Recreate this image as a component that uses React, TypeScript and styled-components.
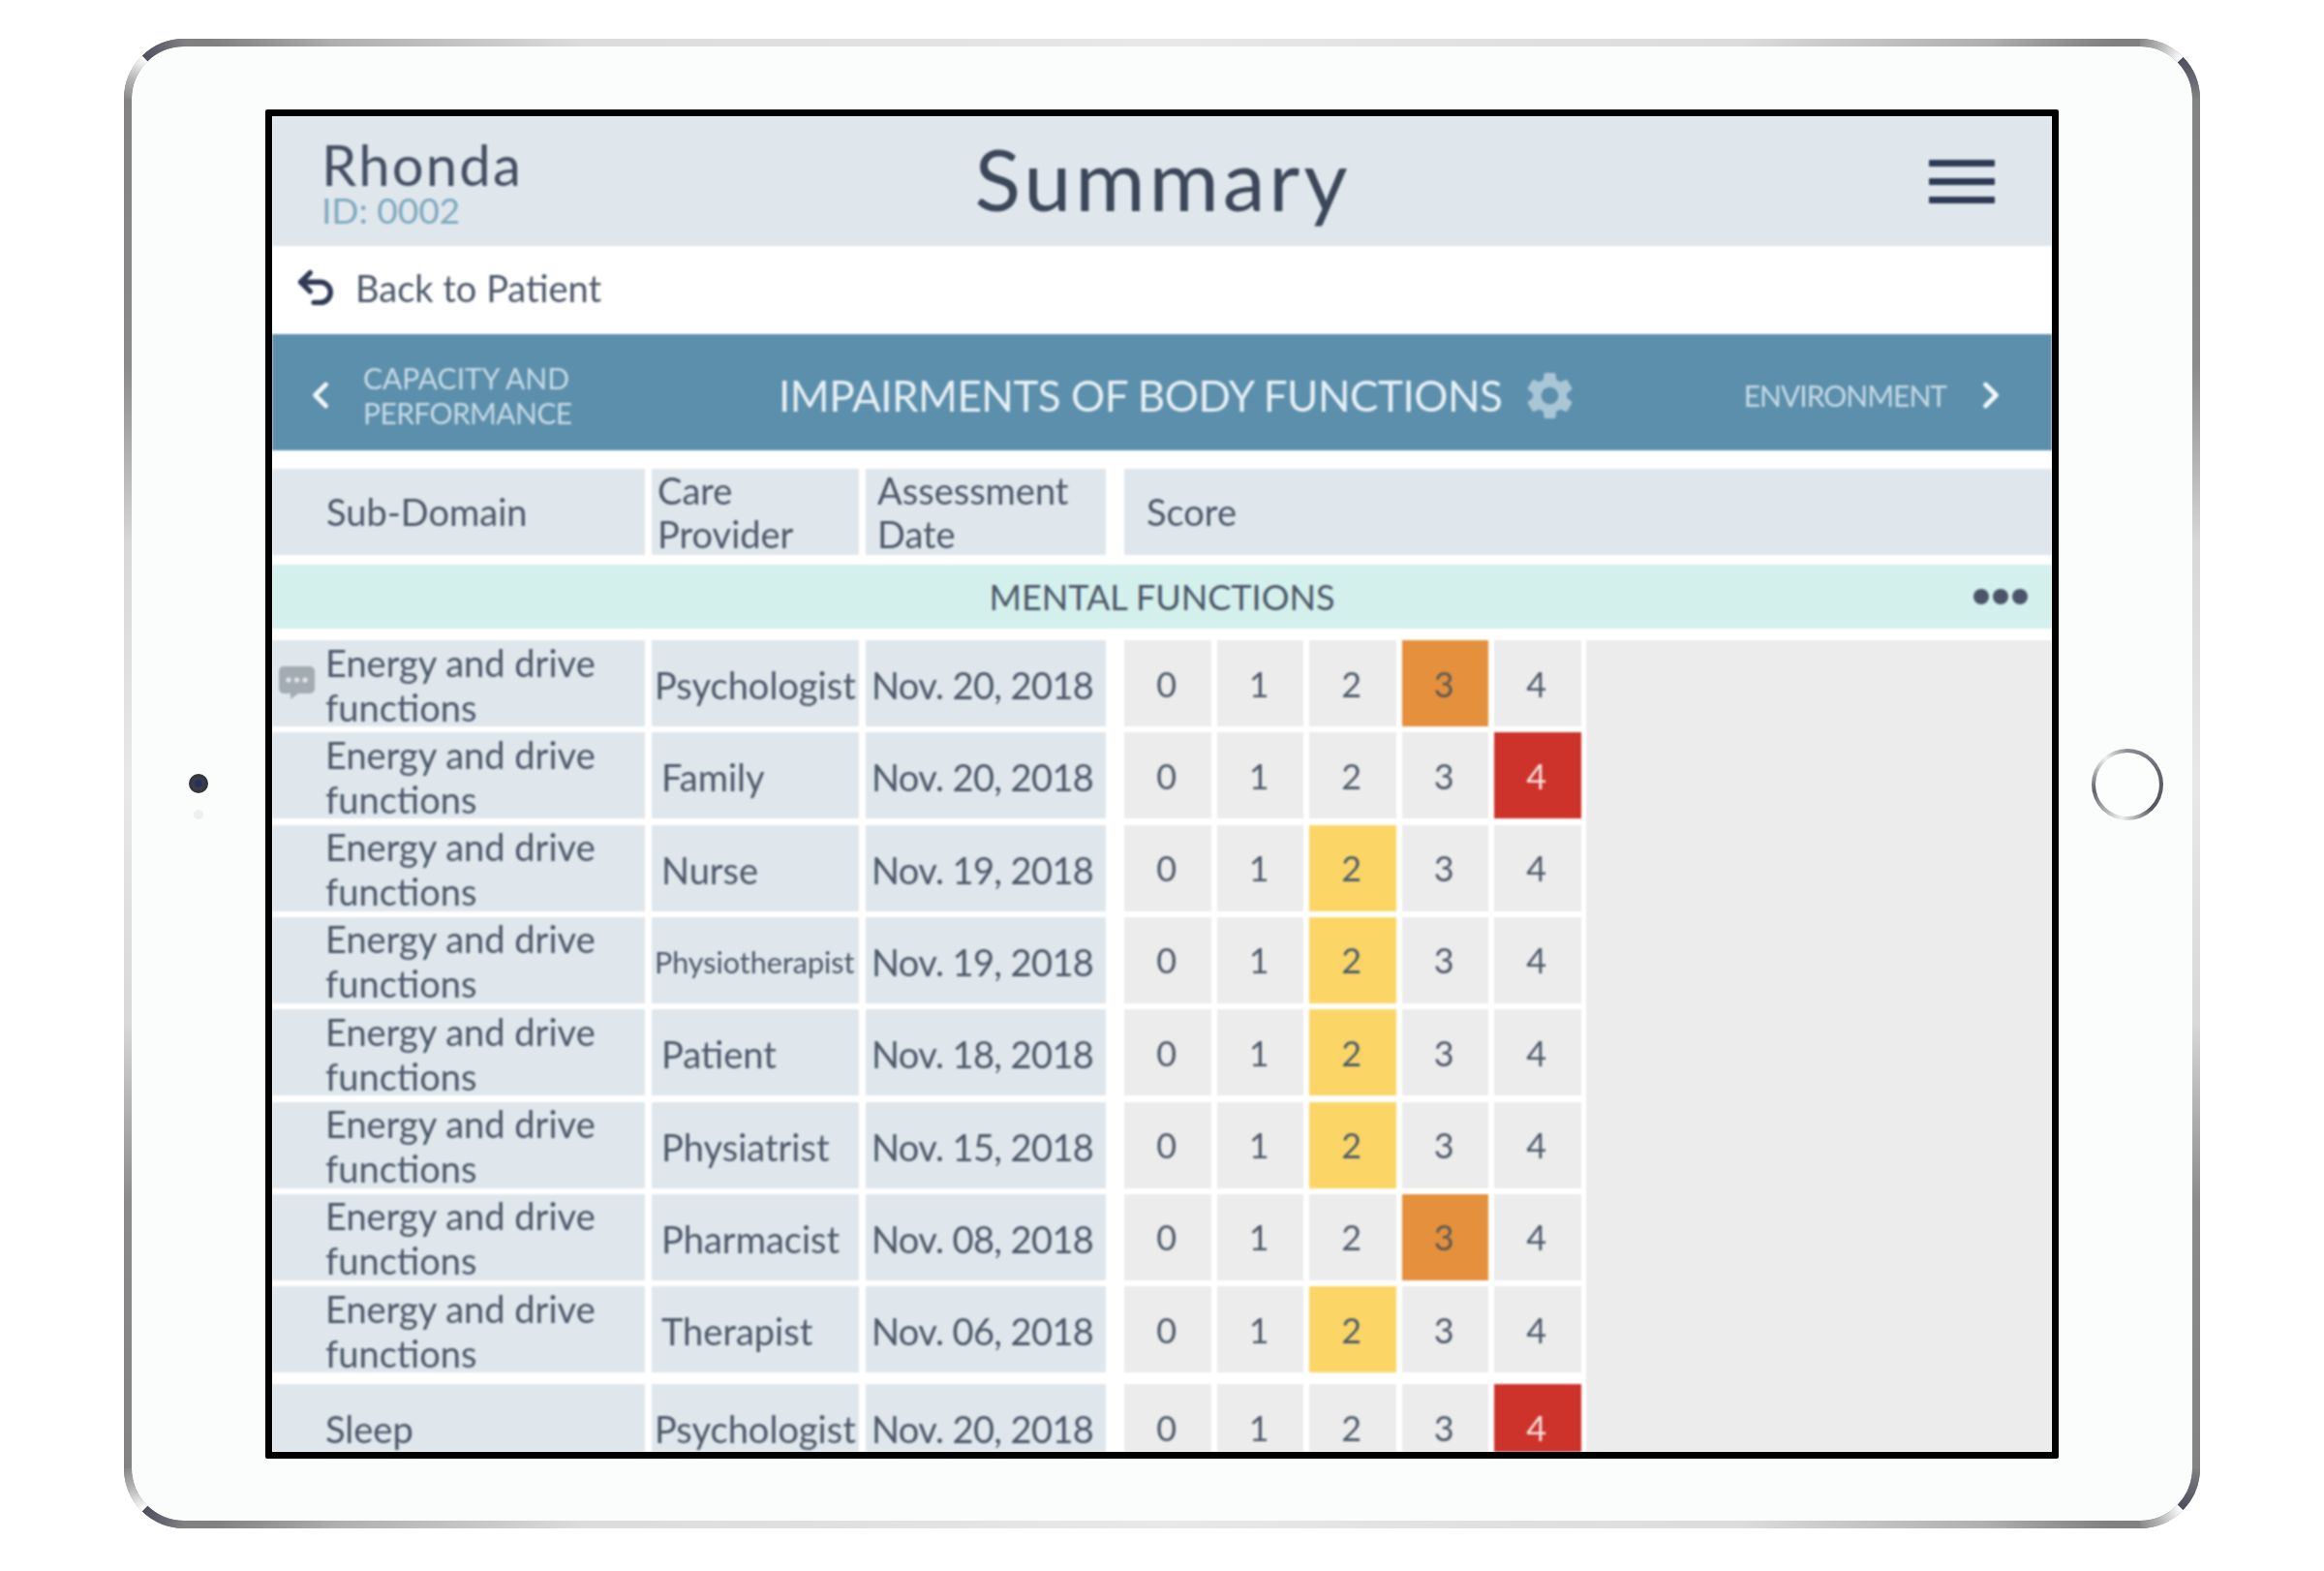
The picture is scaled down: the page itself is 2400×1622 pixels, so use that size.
import styled, { createGlobalStyle } from 'styled-components';
import { Undo2, ChevronLeft, ChevronRight } from 'lucide-react';
import { MdSettings } from 'react-icons/md';

const GlobalStyle = createGlobalStyle`
  html, body {
    margin: 0;
    padding: 0;
    background: #fff;
    font-family: 'Lato', 'Liberation Sans', sans-serif;
    color: #4c5768;
  }
`;

const Page = styled.div`
  width: 2400px;
  height: 1622px;
  padding: 40px 128px 0;
  box-sizing: border-box;
  overflow: hidden;
`;

const Device = styled.div`
  position: relative;
  width: 2144px;
  height: 1538px;
  padding: 8px;
  box-sizing: border-box;
  border-radius: 62px;
  background: conic-gradient(
    #e8e8e8 0deg,
    #dcdcdc 38deg,
    #b0b0b0 48deg,
    #808080 52deg,
    #8b8b8b 68deg,
    #d8d8d8 77deg,
    #e8e8e8 90deg,
    #d8d8d8 103deg,
    #8b8b8b 112deg,
    #808080 128deg,
    #b0b0b0 132deg,
    #dcdcdc 142deg,
    #e8e8e8 180deg,
    #dcdcdc 218deg,
    #b0b0b0 228deg,
    #808080 232deg,
    #8b8b8b 248deg,
    #d8d8d8 257deg,
    #e8e8e8 270deg,
    #d8d8d8 283deg,
    #8b8b8b 292deg,
    #808080 308deg,
    #b0b0b0 312deg,
    #dcdcdc 322deg,
    #e8e8e8 360deg
  );
`;

const Bezel = styled.div`
  height: 100%;
  box-sizing: border-box;
  padding: 65px 0 64px;
  border-radius: 54px;
  background: #fbfcfc;
  display: grid;
  grid-template-columns: 138px 1852px 138px;
`;

const Sensors = styled.div`
  display: flex;
  flex-direction: column;
  align-items: center;
  gap: 17px;
  padding-top: 686px;
`;

const Camera = styled.div`
  width: 20px;
  height: 20px;
  border-radius: 50%;
  background: radial-gradient(circle, #24305a 0 3px, #3b3e4a 5px, #30323a 10px);
`;

const Sensor = styled.div`
  width: 10px;
  height: 10px;
  border-radius: 50%;
  background: #efefef;
`;

const HomeColumn = styled.div`
  display: flex;
  align-items: center;
  justify-content: center;
  padding-left: 4px;
`;

const HomeButton = styled.div`
  width: 74px;
  height: 74px;
  padding: 4px;
  box-sizing: border-box;
  border-radius: 50%;
  background: conic-gradient(
    #8a8a90 0deg,
    #5a5c68 90deg,
    #55565f 135deg,
    #f0f0f0 190deg,
    #5f6068 260deg,
    #f0f0f0 320deg,
    #8a8a90 360deg
  );
`;

const HomeFace = styled.div`
  width: 100%;
  height: 100%;
  border-radius: 50%;
  background: #fcfdfd;
`;

const CornerSvg = styled.svg<{ $top?: boolean; $left?: boolean; $transform?: string }>`
  position: absolute;
  width: 70px;
  height: 70px;
  ${(p) => (p.$top ? 'top: 0;' : 'bottom: 0;')}
  ${(p) => (p.$left ? 'left: 0;' : 'right: 0;')}
  transform: ${(p) => p.$transform || 'none'};
`;

const Corner = ({ id, top, left, transform }: { id: string; top?: boolean; left?: boolean; transform?: string }) => (
  <CornerSvg viewBox='0 0 70 70' $top={top} $left={left} $transform={transform}>
    <defs>
      <linearGradient id={`${id}-light`} gradientUnits='userSpaceOnUse' x1='4' y1='62' x2='21.7' y2='20.3'>
        <stop offset='0' stopColor='#8a8a8a' />
        <stop offset='0.45' stopColor='#b5b5b5' />
        <stop offset='1' stopColor='#ffffff' />
      </linearGradient>
      <linearGradient id={`${id}-dark`} gradientUnits='userSpaceOnUse' x1='21.7' y1='20.3' x2='62' y2='4'>
        <stop offset='0' stopColor='#4c4f5e' />
        <stop offset='0.45' stopColor='#62646e' />
        <stop offset='1' stopColor='#808080' />
      </linearGradient>
    </defs>
    <path d='M4 62A58 58 0 0 1 21.7 20.3' fill='none' stroke={`url(#${id}-light)`} strokeWidth='8' />
    <path d='M21.7 20.3A58 58 0 0 1 62 4' fill='none' stroke={`url(#${id}-dark)`} strokeWidth='8' />
  </CornerSvg>
);

const Screen = styled.div`
  border: 7px solid #000;
  border-radius: 2px;
  background: #fff;
  overflow: hidden;
`;

const ScreenContent = styled.div`
  height: 100%;
  display: flex;
  flex-direction: column;
  filter: blur(0.8px);
`;

const TopBar = styled.header`
  flex: none;
  height: 134px;
  background: #dfe7ed;
  display: grid;
  grid-template-columns: 1fr auto 1fr;
  align-items: center;
  padding: 0 59px 0 51px;
`;

const Patient = styled.div`
  display: flex;
  flex-direction: column;
`;

const PatientName = styled.div`
  font-size: 58px;
  line-height: 60px;
  letter-spacing: 2.2px;
  color: #454f62;
`;

const PatientId = styled.div`
  font-size: 37px;
  line-height: 34px;
  color: #7fa9be;
`;

const Title = styled.h1`
  margin: 0;
  padding: 0 0 6px 10px;
  font-size: 88px;
  font-weight: 400;
  line-height: 1;
  letter-spacing: 3.9px;
  color: #3c4759;
`;

const Hamburger = styled.div`
  justify-self: end;
  width: 68px;
  display: flex;
  flex-direction: column;
  gap: 12px;
`;

const HamburgerBar = styled.div`
  height: 7px;
  border-radius: 1px;
  background: #2f3a55;
`;

const BackRow = styled.div`
  flex: none;
  height: 91px;
  box-sizing: border-box;
  padding: 0 0 5px 22px;
  display: flex;
  align-items: center;
  gap: 18px;
  font-size: 38px;
  color: #4c5768;
`;

const NavBar = styled.nav`
  flex: none;
  height: 120px;
  box-sizing: border-box;
  padding-top: 6px;
  margin-bottom: 19px;
  background: #5c8fac;
  display: grid;
  grid-template-columns: 523px auto 1fr;
  align-items: center;
`;

const NavSide = styled.div`
  display: flex;
  align-items: center;
  color: #c6dbe6;
  font-size: 30px;
  line-height: 36px;
`;

const NavPrev = styled(NavSide)`
  gap: 22px;
  padding-left: 28px;
`;

const NavPrevTail = styled.span`
  letter-spacing: -0.6px;
`;

const NavNext = styled(NavSide)`
  justify-content: flex-end;
  gap: 24px;
  padding-right: 41px;
  letter-spacing: -1px;
`;

const NavChevron = styled.div`
  display: flex;
  color: #f2f6f8;
`;

const NavTitle = styled.div`
  display: flex;
  align-items: center;
  gap: 20px;
  font-size: 44px;
  letter-spacing: -0.5px;
  color: #e6eff4;
`;

const GearIcon = styled(MdSettings)`
  width: 59px;
  height: 59px;
  color: #a9c6d6;
`;

const TableRow = styled.div<{ $gapAbove?: number }>`
  flex: none;
  display: grid;
  grid-template-columns: 385px 214px 248px 1fr;
  grid-template-rows: 89px;
  column-gap: 7px;
  margin-top: ${(p) => p.$gapAbove || 0}px;
`;

const HeadCell = styled.div<{ $pad: number }>`
  display: flex;
  align-items: center;
  padding-left: ${(p) => p.$pad}px;
  background: #dfe7ed;
  font-size: 38px;
  line-height: 45px;
  color: #4c5768;
`;

const ScoreHead = styled(HeadCell)`
  margin-left: 12px;
`;

const SectionBar = styled.div`
  flex: none;
  position: relative;
  height: 66px;
  margin: 10px 0 12px;
  background: #d3f0ec;
  display: flex;
  align-items: center;
  justify-content: center;
  font-size: 36px;
  color: #4c5768;
`;

const MoreDots = styled.div`
  position: absolute;
  right: 25px;
  top: 25px;
  display: flex;
  gap: 4px;
`;

const MoreDot = styled.div`
  width: 16px;
  height: 16px;
  border-radius: 50%;
  background: #4b5569;
`;

const TableBody = styled.div`
  flex: 1;
  min-height: 0;
  overflow: hidden;
  display: flex;
  flex-direction: column;
  gap: 6.33px;
  background: linear-gradient(to right, transparent 1357px, #ececec 0);
`;

const DomainCell = styled.div`
  position: relative;
  display: flex;
  align-items: center;
  padding: 2px 0 0 55px;
  background: #dfe7ed;
  font-size: 38px;
  line-height: 46px;
  color: #4c5768;
`;

const CommentIcon = styled.svg`
  position: absolute;
  left: 7px;
  top: 27px;
  width: 37px;
  height: 34px;
`;

const CareCell = styled.div<{ $inset: number; $small?: boolean }>`
  display: flex;
  align-items: center;
  padding: 3px 0 0 ${(p) => p.$inset}px;
  background: #dfe7ed;
  font-size: ${(p) => (p.$small ? 30.5 : 38)}px;
  white-space: nowrap;
  color: #4c5768;
`;

const DateCell = styled.div`
  display: flex;
  align-items: center;
  padding: 3px 0 0 6px;
  background: #dfe7ed;
  font-size: 38px;
  letter-spacing: -0.6px;
  white-space: nowrap;
  color: #4c5768;
`;

const Scores = styled.div`
  margin-left: 12px;
  display: grid;
  grid-template-columns: repeat(5, 89.5px);
  column-gap: 6px;
  width: 471.5px;
`;

const levelColor: Record<number, string> = { 2: '#fbd667', 3: '#e5903d', 4: '#cd332b' };

const ScoreCell = styled.div<{ $level?: number }>`
  display: flex;
  align-items: center;
  justify-content: center;
  padding: 0 2px 0 0;
  font-size: 36px;
  background: ${(p) => (p.$level ? levelColor[p.$level] : '#ececec')};
  color: ${(p) => (p.$level === 4 ? '#f6dedc' : p.$level === 3 ? '#5f5a52' : '#4f5a69')};
`;

type Entry = { provider: string; inset: number; small?: boolean; date: string; score: number };

const entries: Entry[] = [
  { provider: 'Psychologist', inset: 3, date: 'Nov. 20, 2018', score: 3 },
  { provider: 'Family', inset: 10, date: 'Nov. 20, 2018', score: 4 },
  { provider: 'Nurse', inset: 10, date: 'Nov. 19, 2018', score: 2 },
  { provider: 'Physiotherapist', inset: 3, small: true, date: 'Nov. 19, 2018', score: 2 },
  { provider: 'Patient', inset: 10, date: 'Nov. 18, 2018', score: 2 },
  { provider: 'Physiatrist', inset: 10, date: 'Nov. 15, 2018', score: 2 },
  { provider: 'Pharmacist', inset: 10, date: 'Nov. 08, 2018', score: 3 },
  { provider: 'Therapist', inset: 10, date: 'Nov. 06, 2018', score: 2 },
];

const ScoreRow = ({ score }: { score: number }) => (
  <Scores>
    {[0, 1, 2, 3, 4].map((n) => (
      <ScoreCell key={n} $level={n === score ? n : undefined}>
        {n}
      </ScoreCell>
    ))}
  </Scores>
);

const Comment = () => (
  <CommentIcon viewBox='0 0 37 34'>
    <path d='M5 0h27a5 5 0 0 1 5 5v18a5 5 0 0 1-5 5H20l-8 6v-6H5a5 5 0 0 1-5-5V5a5 5 0 0 1 5-5z' fill='#a3abb3' />
    <circle cx='10' cy='14' r='2.6' fill='#e4e8ec' />
    <circle cx='18.5' cy='14' r='2.6' fill='#e4e8ec' />
    <circle cx='27' cy='14' r='2.6' fill='#e4e8ec' />
  </CommentIcon>
);

export default function App() {
  return (
    <Page>
      <GlobalStyle />
      <Device>
        <Corner id='tl' top left />
        <Corner id='tr' top transform='rotate(90deg)' />
        <Corner id='bl' left transform='scaleY(-1)' />
        <Corner id='br' transform='scaleY(-1) rotate(90deg)' />
        <Bezel>
          <Sensors>
            <Camera />
            <Sensor />
          </Sensors>
          <Screen>
            <ScreenContent>
              <TopBar>
                <Patient>
                  <PatientName>Rhonda</PatientName>
                  <PatientId>ID: 0002</PatientId>
                </Patient>
                <Title>Summary</Title>
                <Hamburger>
                  <HamburgerBar />
                  <HamburgerBar />
                  <HamburgerBar />
                </Hamburger>
              </TopBar>
              <BackRow>
                <Undo2 size={46} strokeWidth={2.8} color='#2f3a55' />
                Back to Patient
              </BackRow>
              <NavBar>
                <NavPrev>
                  <NavChevron>
                    <ChevronLeft size={44} strokeWidth={2.6} />
                  </NavChevron>
                  <div>
                    CAPACITY AND
                    <br />
                    <NavPrevTail>PERFORMANCE</NavPrevTail>
                  </div>
                </NavPrev>
                <NavTitle>
                  IMPAIRMENTS OF BODY FUNCTIONS
                  <GearIcon />
                </NavTitle>
                <NavNext>
                  ENVIRONMENT
                  <NavChevron>
                    <ChevronRight size={44} strokeWidth={2.6} />
                  </NavChevron>
                </NavNext>
              </NavBar>
              <TableRow>
                <HeadCell $pad={56}>Sub-Domain</HeadCell>
                <HeadCell $pad={6}>
                  Care
                  <br />
                  Provider
                </HeadCell>
                <HeadCell $pad={12}>
                  Assessment
                  <br />
                  Date
                </HeadCell>
                <ScoreHead $pad={23}>Score</ScoreHead>
              </TableRow>
              <SectionBar>
                MENTAL FUNCTIONS
                <MoreDots>
                  <MoreDot />
                  <MoreDot />
                  <MoreDot />
                </MoreDots>
              </SectionBar>
              <TableBody>
                {entries.map((entry, i) => (
                  <TableRow key={i}>
                    <DomainCell>
                      {i === 0 && <Comment />}
                      <div>
                        Energy and drive
                        <br />
                        functions
                      </div>
                    </DomainCell>
                    <CareCell $inset={entry.inset} $small={entry.small}>
                      {entry.provider}
                    </CareCell>
                    <DateCell>{entry.date}</DateCell>
                    <ScoreRow score={entry.score} />
                  </TableRow>
                ))}
                <TableRow $gapAbove={5.67}>
                  <DomainCell>Sleep</DomainCell>
                  <CareCell $inset={3}>Psychologist</CareCell>
                  <DateCell>Nov. 20, 2018</DateCell>
                  <ScoreRow score={4} />
                </TableRow>
              </TableBody>
            </ScreenContent>
          </Screen>
          <HomeColumn>
            <HomeButton>
              <HomeFace />
            </HomeButton>
          </HomeColumn>
        </Bezel>
      </Device>
    </Page>
  );
}
